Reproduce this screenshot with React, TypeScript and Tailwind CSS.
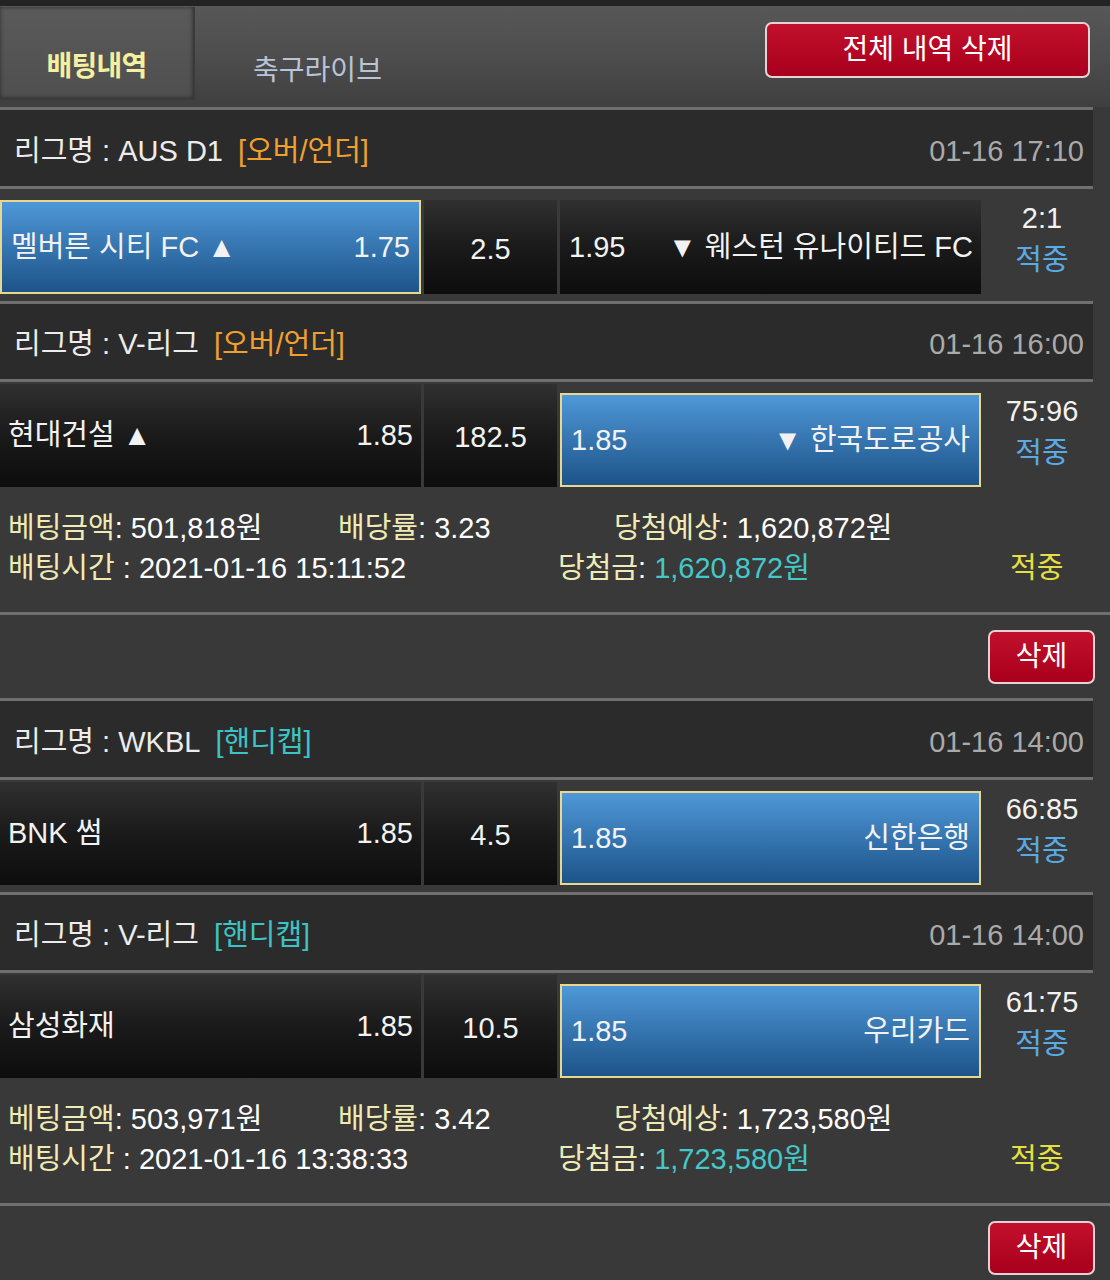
import React from "react";

type Side = "home" | "away";

interface Match {
  league: string;
  market: string;
  marketColor: string;
  time: string;
  home: string;
  homeOdds: string;
  line: string;
  awayOdds: string;
  away: string;
  pick: Side;
  score: string;
  short?: boolean; // 첫 줄처럼 셀이 위에서 떨어져 있는 경우
  last?: boolean; // 정보 영역 바로 위
}

interface Bet {
  matches: Match[];
  amount: string;
  rate: string;
  expected: string;
  betTime: string;
  win: string;
}

const bets: Bet[] = [
  {
    matches: [
      {
        league: "AUS D1",
        market: "[오버/언더]",
        marketColor: "text-[#f0a030]",
        time: "01-16 17:10",
        home: "멜버른 시티 FC ▲",
        homeOdds: "1.75",
        line: "2.5",
        awayOdds: "1.95",
        away: "▼ 웨스턴 유나이티드 FC",
        pick: "home",
        score: "2:1",
        short: true,
      },
      {
        league: "V-리그",
        market: "[오버/언더]",
        marketColor: "text-[#f0a030]",
        time: "01-16 16:00",
        home: "현대건설 ▲",
        homeOdds: "1.85",
        line: "182.5",
        awayOdds: "1.85",
        away: "▼ 한국도로공사",
        pick: "away",
        score: "75:96",
        last: true,
      },
    ],
    amount: "501,818원",
    rate: "3.23",
    expected: "1,620,872원",
    betTime: "2021-01-16 15:11:52",
    win: "1,620,872원",
  },
  {
    matches: [
      {
        league: "WKBL",
        market: "[핸디캡]",
        marketColor: "text-[#3cc4c4]",
        time: "01-16 14:00",
        home: "BNK 썸",
        homeOdds: "1.85",
        line: "4.5",
        awayOdds: "1.85",
        away: "신한은행",
        pick: "away",
        score: "66:85",
      },
      {
        league: "V-리그",
        market: "[핸디캡]",
        marketColor: "text-[#3cc4c4]",
        time: "01-16 14:00",
        home: "삼성화재",
        homeOdds: "1.85",
        line: "10.5",
        awayOdds: "1.85",
        away: "우리카드",
        pick: "away",
        score: "61:75",
        last: true,
      },
    ],
    amount: "503,971원",
    rate: "3.42",
    expected: "1,723,580원",
    betTime: "2021-01-16 13:38:33",
    win: "1,723,580원",
  },
];

const darkCell =
  "bg-gradient-to-b from-[#303030] via-[#1a1a1a] to-[#0d0d0d]";
const blueCell =
  "bg-gradient-to-b from-[#4f98d8] to-[#1d5489] border-2 border-[#e8d78c]";

function Line({ full = false }: { full?: boolean }) {
  return <div className={`h-[3px] bg-[#6f6f6f] ${full ? "w-full" : "w-[1093px]"}`} />;
}

function RedButton({ label, className }: { label: string; className: string }) {
  return (
    <button
      type="button"
      className={`flex items-center justify-center rounded-[7px] border-2 border-[#e6d2d4] bg-gradient-to-b from-[#c2102c] to-[#a8001c] text-[28px] leading-none text-white ${className}`}
    >
      {label}
    </button>
  );
}

function LeagueHeader({ m, tall }: { m: Match; tall: boolean }) {
  return (
    <div
      className={`flex w-[1093px] items-center justify-between bg-[#2b2b2b] pl-[14px] pr-[9px] pt-[6px] ${
        tall ? "h-[76px]" : "h-[75px]"
      }`}
    >
      <div className="flex items-center text-[#ececec]">
        <span>리그명 : {m.league}</span>
        <span className={`ml-[15px] ${m.marketColor}`}>{m.market}</span>
      </div>
      <span className="text-[#aaaaaa]">{m.time}</span>
    </div>
  );
}

function MatchRow({ m }: { m: Match }) {
  const homeSel = m.pick === "home";
  const awaySel = m.pick === "away";
  // 선택 셀은 항상 위에서 11px, 나머지는 2px (첫 줄은 모두 11px)
  const darkBox = m.short ? "mt-[11px] h-[94px]" : "mt-[2px] h-[103px]";
  const selBox = "mt-[11px] h-[94px]";
  return (
    <div className={`flex items-start ${m.last ? "h-[106px]" : "h-[112px]"}`}>
      <div
        className={`flex w-[421px] items-center justify-between ${
          homeSel ? `${selBox} ${blueCell} pl-[9px] pr-[9px]` : `${darkBox} ${darkCell} pl-[8px] pr-[8px]`
        }`}
      >
        <span>{m.home}</span>
        <span>{m.homeOdds}</span>
      </div>
      <div className={`ml-[3px] flex w-[133px] items-center justify-center ${darkBox} ${darkCell}`}>
        <span className="pt-[4px]">{m.line}</span>
      </div>
      <div
        className={`ml-[3px] flex w-[421px] items-center justify-between ${
          awaySel ? `${selBox} ${blueCell} pl-[9px] pr-[9px]` : `${darkBox} ${darkCell} pl-[9px] pr-[8px]`
        }`}
      >
        <span>{m.awayOdds}</span>
        <span>{m.away}</span>
      </div>
      <div className="mt-[8px] flex flex-1 flex-col items-center pr-[7px] leading-[42px]">
        <span className="text-[#f2f2f2]">{m.score}</span>
        <span className="text-[#5aaae6]">적중</span>
      </div>
    </div>
  );
}

function BetBlock({ bet }: { bet: Bet }) {
  return (
    <div>
      {bet.matches.map((m, i) => (
        <div key={i}>
          <Line />
          <LeagueHeader m={m} tall={i === 0} />
          <Line />
          <MatchRow m={m} />
        </div>
      ))}

      {/* 베팅 정보 */}
      <div className="h-[124px] bg-[#393939] pl-[8px] pt-[20px] leading-[40px]">
        <div className="flex">
          <span className="w-[330px]">
            <span className="text-[#f0ebb4]">베팅금액</span>
            <span className="text-white">: {bet.amount}</span>
          </span>
          <span className="w-[276px]">
            <span className="text-[#f0ebb4]">배당률</span>
            <span className="text-white">: {bet.rate}</span>
          </span>
          <span>
            <span className="text-[#f0ebb4]">당첨예상</span>
            <span className="text-white">: {bet.expected}</span>
          </span>
        </div>
        <div className="flex">
          <span className="w-[550px]">
            <span className="text-[#f0ebb4]">배팅시간</span>
            <span className="text-white"> : {bet.betTime}</span>
          </span>
          <span className="w-[452px]">
            <span className="text-[#f0ebb4]">당첨금</span>
            <span className="text-white">: </span>
            <span className="text-[#44c8c8]">{bet.win}</span>
          </span>
          <span className="text-[#e6e040]">적중</span>
        </div>
      </div>
      <Line full />
      <div className="flex h-[83px] justify-end bg-[#393939] pr-[15px] pt-[15px]">
        <RedButton label="삭제" className="h-[54px] w-[107px]" />
      </div>
    </div>
  );
}

export default function App() {
  return (
    <div className="min-h-screen w-[1110px] overflow-hidden bg-[#393939] font-['Liberation_Sans','Noto_Sans_CJK_KR',sans-serif] text-[29px] leading-none text-[#f2f2f2]">
      <div className="h-[6px] bg-[#232323]" />

      {/* 탭 */}
      <div className="flex h-[101px] bg-gradient-to-b from-[#575757] via-[#4d4d4d] to-[#3f3f3f]">
        <div className="mt-[1px] flex h-[93px] w-[195px] items-center justify-center border-r-2 border-b-2 border-[#3a3a3a] bg-gradient-to-b from-[#5a5a5a] to-[#4f4f4f] pt-[28px] text-[28px] font-bold tracking-tight text-[#f4f0a0] shadow-[inset_0_0_4px_rgba(0,0,0,0.5)]">
          배팅내역
        </div>
        <div className="flex w-[245px] items-center justify-center pt-[28px] text-[28px] text-[#b9c4d6]">
          축구라이브
        </div>
        <div className="flex flex-1 justify-end pr-[20px] pt-[16px]">
          <RedButton label="전체 내역 삭제" className="h-[56px] w-[325px]" />
        </div>
      </div>

      {bets.map((b, i) => (
        <BetBlock key={i} bet={b} />
      ))}
    </div>
  );
}
